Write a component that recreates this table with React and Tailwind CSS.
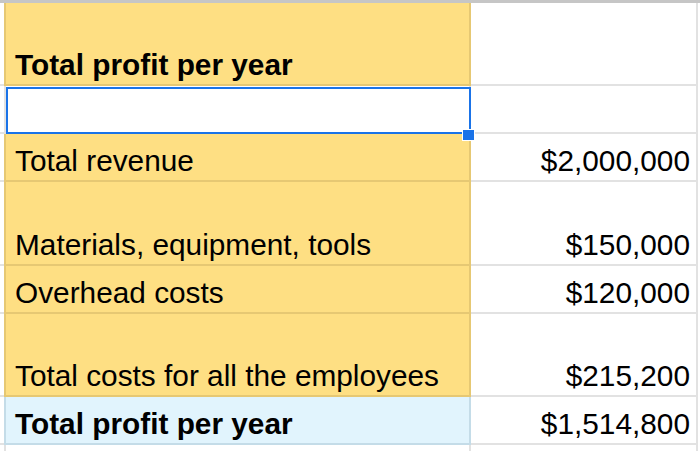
import React from "react";

const rows = [
  { label: "Total profit per year", value: "", h: "h-[83px]", bold: true, kind: "yellow" },
  { label: "", value: "", h: "h-[48px]", kind: "selected" },
  { label: "Total revenue", value: "$2,000,000", h: "h-[48px]", kind: "yellow" },
  { label: "Materials, equipment, tools", value: "$150,000", h: "h-[84px]", kind: "yellow" },
  { label: "Overhead costs", value: "$120,000", h: "h-[48px]", kind: "yellow" },
  { label: "Total costs for all the employees", value: "$215,200", h: "h-[83px]", kind: "yellow" },
  { label: "Total profit per year", value: "$1,514,800", h: "h-[48px]", bold: true, kind: "blue" },
];

function Row({ r }) {
  const c1 =
    r.kind === "yellow"
      ? "bg-[#fedf83] border-[#e6c873]"
      : r.kind === "blue"
      ? "bg-[#e1f4fd] border-[#c4dce8]"
      : "bg-white border-[#e2e2e2]";
  return (
    <div className={`flex ${r.h}`}>
      <div className="w-[4px] shrink-0 border-b-2 border-[#e2e2e2]" />
      <div
        className={`relative w-[467px] shrink-0 border-l-2 border-r-2 border-b-2 flex items-end pl-[9px] pb-[4px] ${r.kind === "selected" ? "z-10" : ""} ${c1}`}
      >
        <span className={`text-[29.8px] leading-[30px] text-black whitespace-nowrap ${r.bold ? "font-bold" : ""}`}>
          {r.label}
        </span>
        {r.kind === "selected" && (
          <>
            <div className="absolute left-0 right-[-2px] top-[1px] bottom-[-2px] border-2 border-[#1a73e8]" />
            <div className="absolute left-[456px] top-[43px] w-[13px] h-[12px] bg-[#1a73e8] border border-white" />
          </>
        )}
      </div>
      <div className="w-[227px] shrink-0 border-r-2 border-b-2 border-[#e2e2e2] bg-white flex items-end justify-end pr-[6px] pb-[4px]">
        <span className="text-[29.8px] leading-[30px] text-black whitespace-nowrap">{r.value}</span>
      </div>
    </div>
  );
}

export default function App() {
  return (
    <div
      className="w-[700px] h-[451px] bg-white overflow-hidden flex flex-col"
      style={{ fontFamily: '"Liberation Sans", Arial, sans-serif' }}
    >
      <div className="h-[3px] bg-[#c6c6c6] shrink-0" />
      {rows.map((r, i) => (
        <Row key={i} r={r} />
      ))}
      <div className="flex flex-1">
        <div className="w-[4px] shrink-0" />
        <div className="w-[467px] shrink-0 border-l-2 border-r-2 border-[#e2e2e2]" />
        <div className="w-[227px] shrink-0 border-r-2 border-[#e2e2e2]" />
      </div>
    </div>
  );
}
